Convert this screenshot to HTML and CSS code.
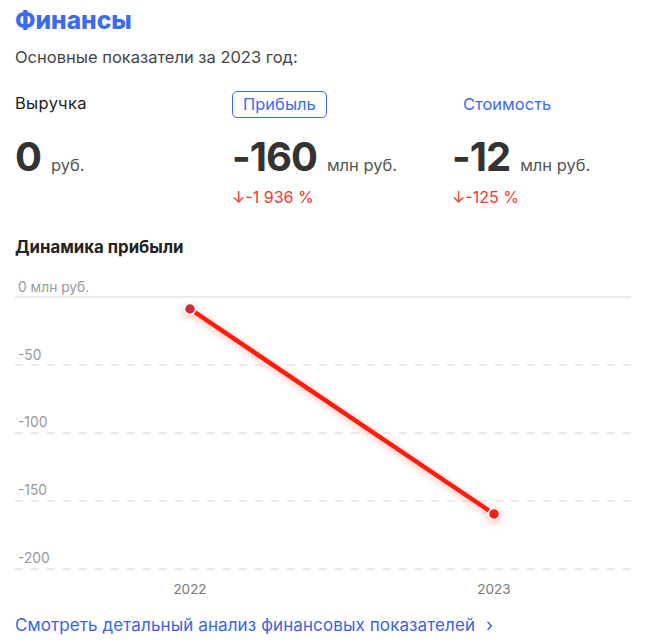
FILE: index.html
```html
<!DOCTYPE html>
<html lang="ru">
    <head>
        <title>Финансы</title>
        <link rel="stylesheet" href="styles.css">
    </head>
    <body>
        <section class="finance">
            <h1 class="finance-title">Финансы</h1>
            <p class="finance-sub">Основные показатели за 2023 год:</p>

            <!-- Indicators -->
            <div class="stats">
                <div class="stat">
                    <span class="stat-label">Выручка</span>
                    <div class="stat-value"><b>0</b><span>руб.</span></div>
                </div>
                <div class="stat">
                    <span class="stat-tab active">Прибыль</span>
                    <div class="stat-value"><b>-160</b><span>млн руб.</span></div>
                    <div class="stat-change">↓-1 936 %</div>
                </div>
                <div class="stat">
                    <span class="stat-tab">Стоимость</span>
                    <div class="stat-value"><b>-12</b><span>млн руб.</span></div>
                    <div class="stat-change">↓-125 %</div>
                </div>
            </div>

            <h2 class="chart-title">Динамика прибыли</h2>

            <!-- Chart -->
            <svg class="chart" width="622" height="330" viewBox="0 0 622 330">
                <defs>
                    <filter id="glow" x="-20%" y="-20%" width="140%" height="140%">
                        <feDropShadow dx="0" dy="2" stdDeviation="3" flood-color="#ff2a1a" flood-opacity="0.35"/>
                    </filter>
                </defs>
                <text class="axis" x="3" y="17">0 млн руб.</text>
                <line x1="0" y1="22" x2="616" y2="22" stroke="#e6e6e6" stroke-width="1.5"/>

                <g stroke="#e3e3e3" stroke-width="1.5" stroke-dasharray="8 8">
                    <line x1="0" y1="90" x2="616" y2="90"/>
                    <line x1="0" y1="158" x2="616" y2="158"/>
                    <line x1="0" y1="226" x2="616" y2="226"/>
                    <line x1="0" y1="294" x2="616" y2="294"/>
                </g>
                <text class="axis" x="3" y="85">-50</text>
                <text class="axis" x="3" y="152">-100</text>
                <text class="axis" x="3" y="220">-150</text>
                <text class="axis" x="3" y="288">-200</text>

                <text class="axis year" x="175" y="319">2022</text>
                <text class="axis year" x="479" y="319">2023</text>

                <g filter="url(#glow)">
                    <line x1="175" y1="34" x2="479" y2="239" stroke="#ff1a0f" stroke-width="4.5"/>
                    <circle cx="175" cy="34" r="5.5" fill="#d8283a" stroke="#fff" stroke-width="1.5"/>
                    <circle cx="479" cy="239" r="5.5" fill="#ff1a0f" stroke="#fff" stroke-width="1.5"/>
                </g>
            </svg>

            <a class="more" href="#">Смотреть детальный анализ финансовых показателей <span class="chev">›</span></a>
        </section>
    </body>
</html>
```

FILE: styles.css
```css
/* Base */
body {
    margin: 0;
    font-family: Inter, "Noto Sans", sans-serif;
    color: #333;
    background-color: #fff;
}

.finance {
    padding: 0 15px;
}

/* Header */
.finance-title {
    margin: 5px 0 0;
    font-size: 24.5px;
    line-height: 30px;
    font-weight: 800;
    color: #3b6cf0;
}

.finance-sub {
    margin: 11px 0 0;
    font-size: 16.5px;
    line-height: 22px;
    color: #444;
}

/* Indicators */
.stats {
    display: grid;
    grid-template-columns: 217px 220px 1fr;
    margin-top: 23px;
}

.stat-label,
.stat-tab {
    display: inline-block;
    height: 27px;
    line-height: 25px;
    font-size: 16.5px;
    box-sizing: border-box;
}

.stat-label {
    color: #222;
    letter-spacing: 0.3px;
}

.stat-tab {
    padding: 0 10px;
    border: 1px solid transparent;
    border-radius: 5px;
    color: #3b6cf0;
}

.stat-tab.active {
    border-color: #3b6cf0;
}

.stat-value {
    display: flex;
    align-items: baseline;
    gap: 10px;
    height: 48px;
    margin-top: 15px;
    line-height: 48px;
}

.stat-value b {
    font-size: 40px;
    font-weight: 700;
    color: #333;
    letter-spacing: -1px;
}

.stat-value span {
    font-size: 16.5px;
    color: #555;
}

.stat-change {
    margin-top: 6px;
    font-size: 16px;
    line-height: 20px;
    color: #f5372a;
}

/* Chart */
.chart-title {
    margin: 28px 0 0;
    font-size: 16.8px;
    line-height: 24px;
    font-weight: 700;
    color: #222;
}

.chart {
    display: block;
    margin-top: 16px;
    overflow: visible;
}

.axis {
    font-family: Inter, "Noto Sans", sans-serif;
    font-size: 13.8px;
    fill: #999;
}

.year {
    font-size: 13.5px;
    fill: #777;
    text-anchor: middle;
}

/* Link */
.more {
    display: inline-block;
    margin-top: 9px;
    font-size: 17px;
    line-height: 22px;
    letter-spacing: 0.1px;
    color: #3b63e6;
    text-decoration: none;
}

.chev {
    margin-left: 6px;
    font-size: 18px;
}
```
